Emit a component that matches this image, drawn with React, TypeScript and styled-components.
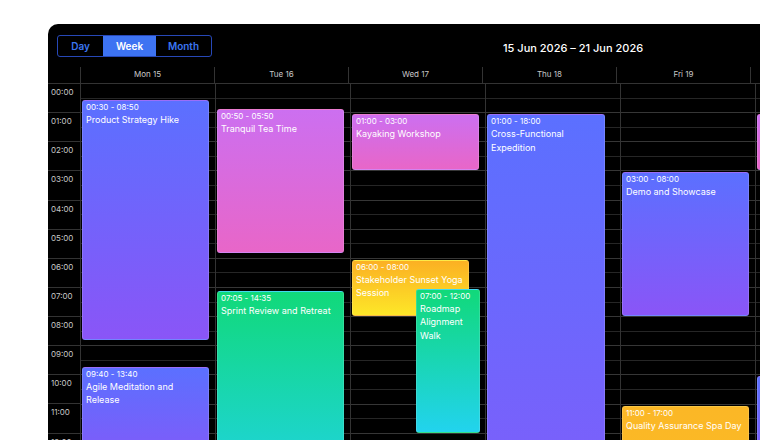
import React from "react";
import styled, { createGlobalStyle } from "styled-components";

const Global = createGlobalStyle`
  html, body { margin: 0; padding: 0; background: #fff; overflow: hidden; }
  body { font-family: Inter, "Noto Sans", sans-serif; }
`;

const H = 29.14;

const Page = styled.div`
  padding: 24px 0 0 48px;
  width: 760px;
  height: 440px;
  box-sizing: border-box;
  overflow: hidden;
`;
const Card = styled.div`
  background: #000;
  border-radius: 10px 0 0 0;
  width: 760px;
  height: 600px;
  display: flex;
  flex-direction: column;
`;
const Toolbar = styled.div`
  display: flex;
  align-items: center;
  height: 43px;
  padding: 1px 9px 0;
  box-sizing: border-box;
  position: relative;
`;
const Toggle = styled.div`
  display: flex;
  border: 1px solid #2748b8;
  border-radius: 3px;
  height: 20px;
  overflow: hidden;
`;
const ToggleBtn = styled.div<{ $active?: boolean; $w: number }>`
  width: ${(p) => p.$w}px;
  display: flex;
  align-items: center;
  justify-content: center;
  font-size: 10px;
  font-weight: 600;
  color: ${(p) => (p.$active ? "#fff" : "#3b76f0")};
  background: ${(p) => (p.$active ? "#3d73f2" : "transparent")};
`;
const Title = styled.div`
  position: absolute;
  left: 455px;
  top: 17px;
  color: #fff;
  font-size: 11px;
  font-weight: 500;
`;
const HeaderRow = styled.div`
  display: flex;
  height: 16px;
  border-bottom: 1px solid #333;
`;
const Corner = styled.div`
  width: 32px;
  border-right: 1px solid #333;
  flex-shrink: 0;
`;
const DayHead = styled.div`
  width: 134px;
  flex-shrink: 0;
  border-right: 1px solid #333;
  color: #c8c8c8;
  font-size: 8px;
  display: flex;
  align-items: center;
  justify-content: center;
  padding-bottom: 2px;
  box-sizing: border-box;
`;
const Body = styled.div`
  display: flex;
`;
const TimeCol = styled.div`
  width: 32px;
  flex-shrink: 0;
  display: flex;
  flex-direction: column;
`;
const TimeCell = styled.div`
  height: ${H}px;
  box-sizing: border-box;
  border-bottom: 1px solid #333;
  color: #c8c8c8;
  font-size: 8px;
  padding: 3px 0 0 3px;
`;
const DayCol = styled.div`
  position: relative;
  width: 134px;
  flex-shrink: 0;
  border-left: 1px solid #333;
  height: ${H * 13}px;
  background-image: repeating-linear-gradient(
    to bottom,
    transparent 0,
    transparent ${H / 2 - 1}px,
    #262626 ${H / 2 - 1}px,
    #262626 ${H / 2}px,
    transparent ${H / 2}px,
    transparent ${H - 1}px,
    #363636 ${H - 1}px,
    #363636 ${H}px
  );
`;
const Event = styled.div<{ $bg: string }>`
  position: absolute;
  box-sizing: border-box;
  border-radius: 3px;
  border: 1px solid rgba(255, 255, 255, 0.15);
  background: ${(p) => p.$bg};
  color: #fff;
  padding: 1px 3px;
  overflow: hidden;
`;
const EvTime = styled.div`
  font-size: 8px;
  line-height: 11px;
`;
const EvTitle = styled.div`
  font-size: 9px;
  line-height: 13.5px;
`;

const BLUE = "linear-gradient(#5b70ff, #8a55f7)";
const BLUE_LONG = "linear-gradient(#5b70ff, #7a60fb 70%, #8a55f7)";
const PINK = "linear-gradient(#cc6ff0, #e866c8)";
const GREEN = "linear-gradient(#11d97a, #22d3ee)";
const YEL = "linear-gradient(#fbb023, #fde728)";
const ORANGE = "linear-gradient(#fbb726, #fbbf24)";

type Ev = { s: number; e: number; time: string; title: string; bg: string; l?: number; w?: number };
const days: { name: string; evs: Ev[] }[] = [
  { name: "Mon 15", evs: [
    { s: 0.5, e: 8.83, time: "00:30 - 08:50", title: "Product Strategy Hike", bg: BLUE },
    { s: 9.67, e: 13.67, time: "09:40 - 13:40", title: "Agile Meditation and Release", bg: BLUE },
  ]},
  { name: "Tue 16", evs: [
    { s: 0.83, e: 5.83, time: "00:50 - 05:50", title: "Tranquil Tea Time", bg: PINK },
    { s: 7.08, e: 14.58, time: "07:05 - 14:35", title: "Sprint Review and Retreat", bg: GREEN },
  ]},
  { name: "Wed 17", evs: [
    { s: 1, e: 3, time: "01:00 - 03:00", title: "Kayaking Workshop", bg: PINK },
    { s: 6, e: 8, time: "06:00 - 08:00", title: "Stakeholder Sunset Yoga Session", bg: YEL, w: 117 },
    { s: 7, e: 12, time: "07:00 - 12:00", title: "Roadmap Alignment Walk", bg: GREEN, l: 65, w: 64 },
  ]},
  { name: "Thu 18", evs: [
    { s: 1, e: 18, time: "01:00 - 18:00", title: "Cross-Functional Expedition", bg: BLUE_LONG, w: 118 },
  ]},
  { name: "Fri 19", evs: [
    { s: 3, e: 8, time: "03:00 - 08:00", title: "Demo and Showcase", bg: BLUE },
    { s: 11, e: 17, time: "11:00 - 17:00", title: "Quality Assurance Spa Day", bg: ORANGE },
  ]},
  { name: "", evs: [
    { s: 1, e: 3, time: "01:00 - 03:00", title: "Team Lunch", bg: PINK },
    { s: 10, e: 14, time: "10:00 - 14:00", title: "Planning", bg: BLUE },
  ]},
];

const hours = Array.from({ length: 13 }, (_, i) => `${String(i).padStart(2, "0")}:00`);

export default function App() {
  return (
    <>
      <Global />
      <Page>
        <Card>
          <Toolbar>
            <Toggle>
              <ToggleBtn $w={45}>Day</ToggleBtn>
              <ToggleBtn $w={53} $active>Week</ToggleBtn>
              <ToggleBtn $w={55}>Month</ToggleBtn>
            </Toggle>
            <Title>15 Jun 2026 – 21 Jun 2026</Title>
          </Toolbar>
          <HeaderRow>
            <Corner />
            {days.map((d, i) => (
              <DayHead key={i}>{d.name}</DayHead>
            ))}
          </HeaderRow>
          <Body>
            <TimeCol>
              {hours.map((h) => (
                <TimeCell key={h}>{h}</TimeCell>
              ))}
            </TimeCol>
            {days.map((d, i) => (
              <DayCol key={i}>
                {d.evs.map((ev) => (
                  <Event
                    key={ev.title}
                    $bg={ev.bg}
                    style={{
                      top: ev.s * H + 1,
                      height: (ev.e - ev.s) * H - 2,
                      left: ev.l ?? 1,
                      width: ev.w ?? 127,
                    }}
                  >
                    <EvTime>{ev.time}</EvTime>
                    <EvTitle>{ev.title}</EvTitle>
                  </Event>
                ))}
              </DayCol>
            ))}
          </Body>
        </Card>
      </Page>
    </>
  );
}
